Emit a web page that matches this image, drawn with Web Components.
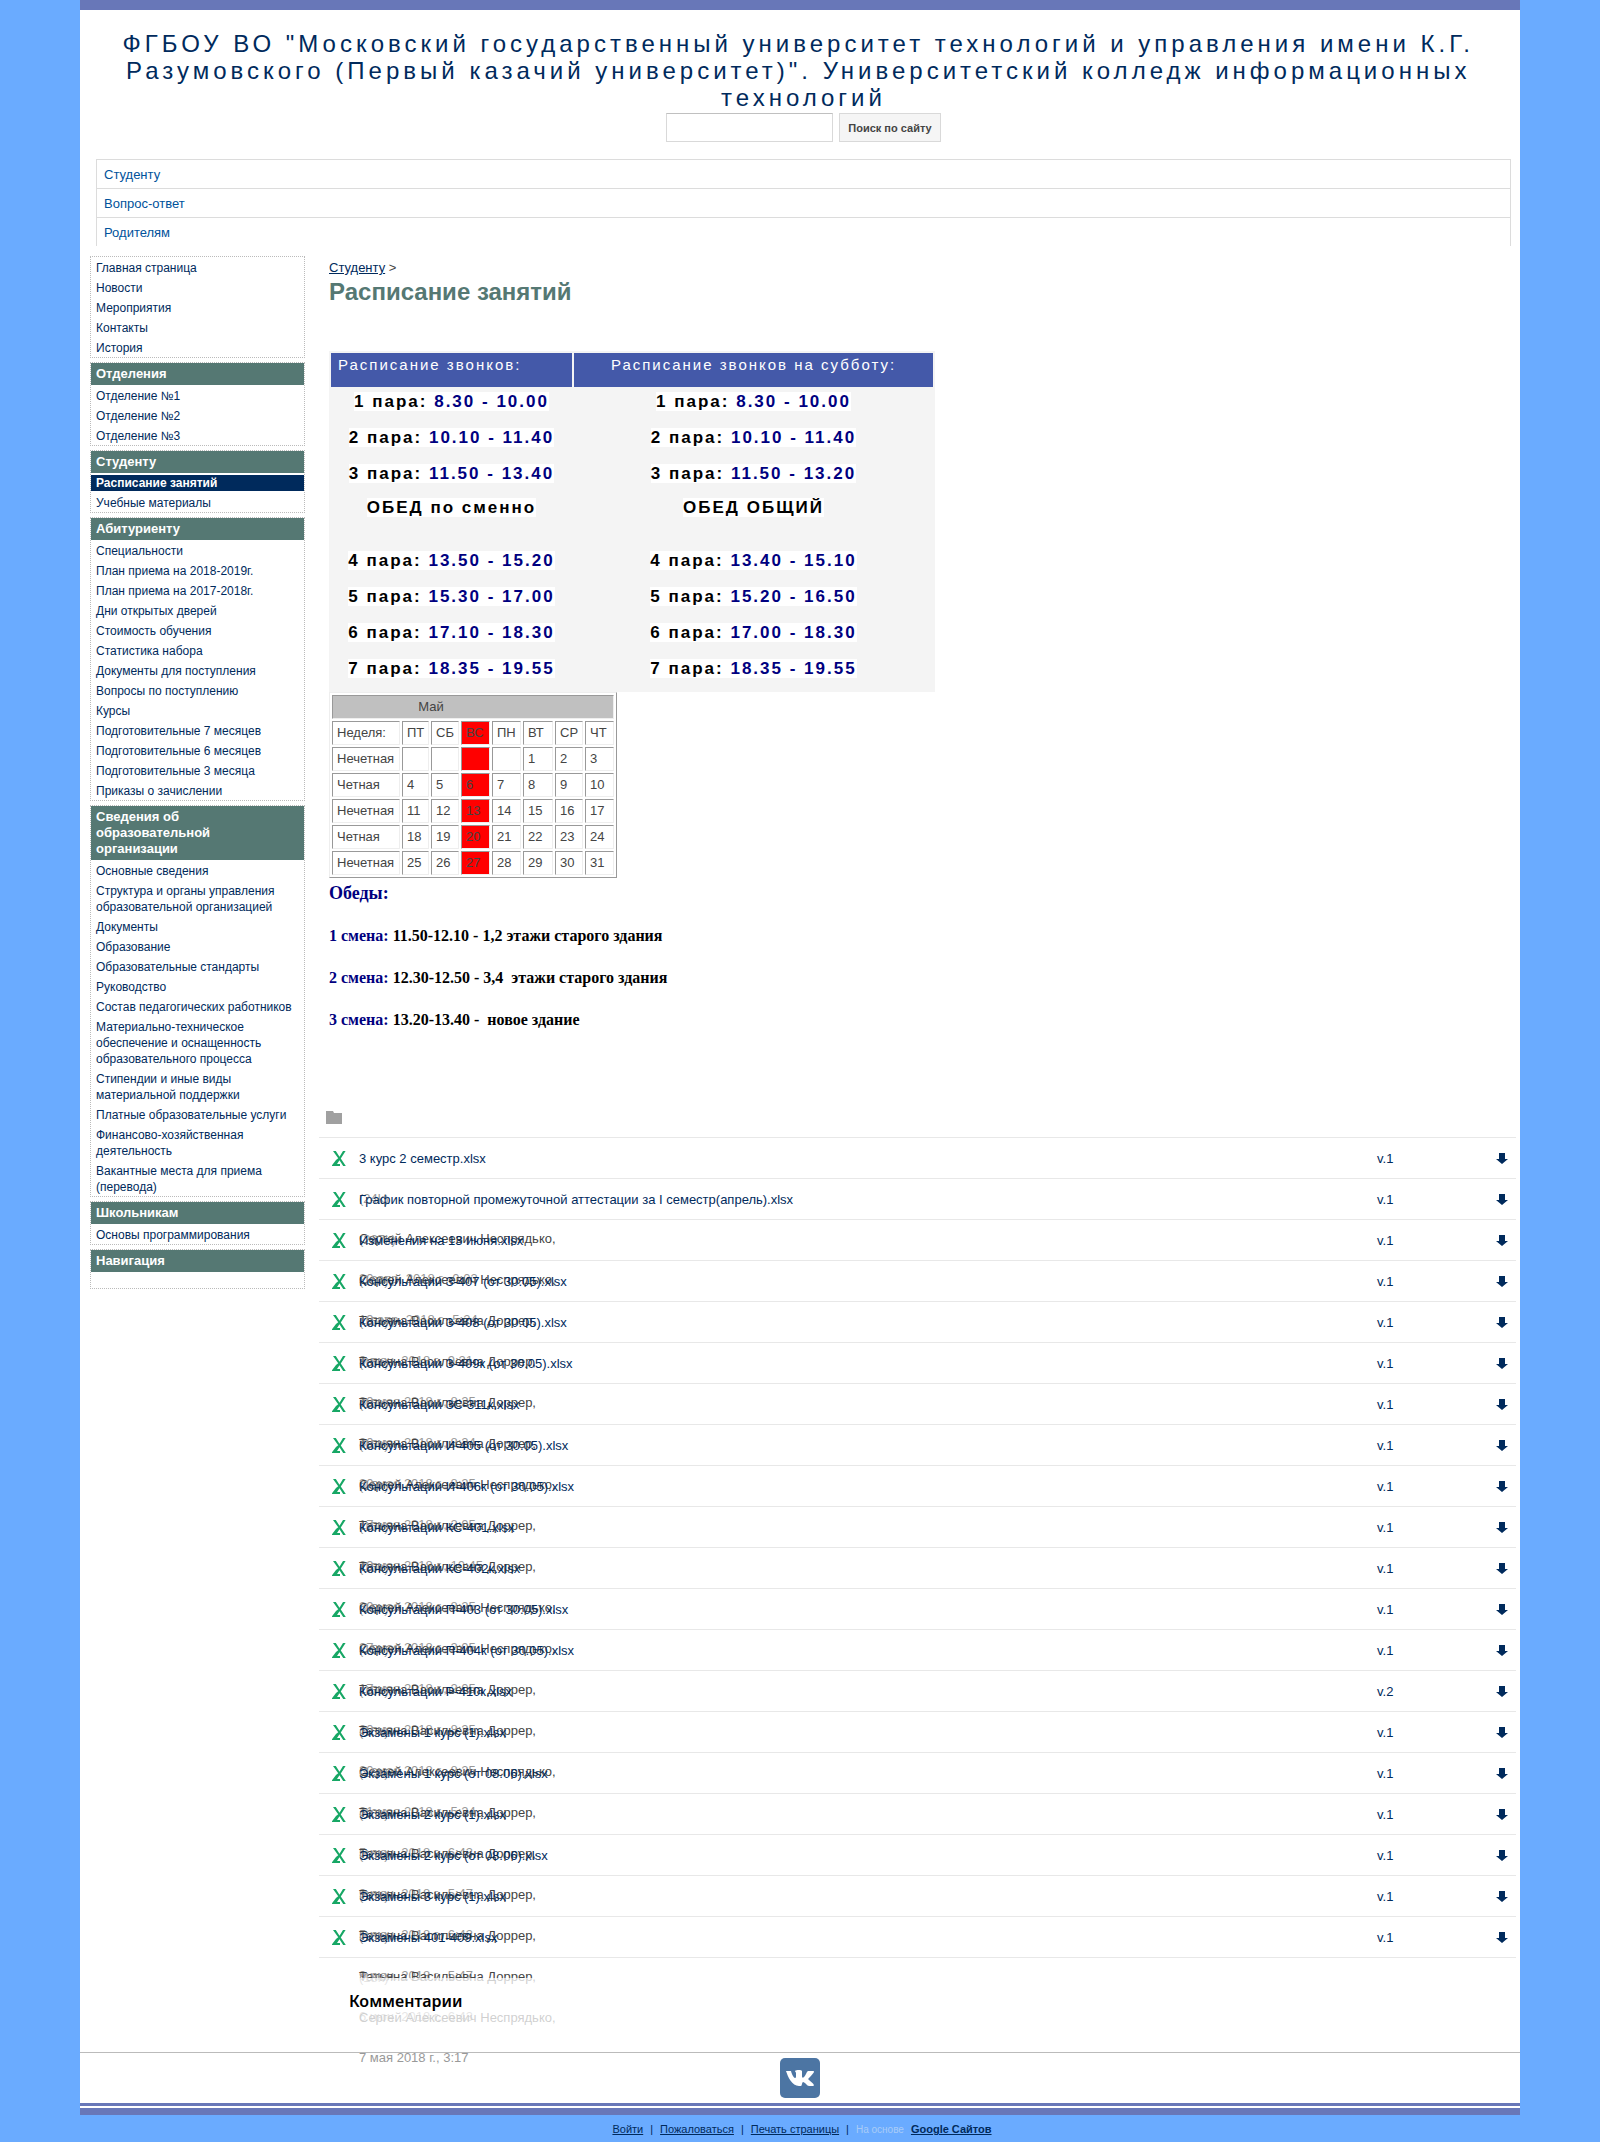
<!DOCTYPE html>
<html lang="ru">
<head>
<meta charset="utf-8">
<meta name="viewport" content="width=device-width, initial-scale=1">
<title>Расписание занятий</title>
<style>
:root{--link:#002a5c;--green:#557873;--line:#dcdcdc;--bar:#6877b8;--sky:#6aabff}
body{margin:0;background:var(--sky);font-family:"Liberation Sans",Arial,sans-serif;font-size:13px;line-height:16px;color:#444}
</style>
</head>
<body>
<page-shell>
  <site-header slot="header"></site-header>
  <nav slot="side" aria-label="Разделы">
    <side-box items="Главная страница|Новости|Мероприятия|Контакты|История"></side-box>
    <side-box heading="Отделения" items="Отделение №1|Отделение №2|Отделение №3"></side-box>
    <side-box heading="Студенту" items="*Расписание занятий|Учебные материалы"></side-box>
    <side-box heading="Абитуриенту" items="Специальности|План приема на 2018-2019г.|План приема на 2017-2018г.|Дни открытых дверей|Стоимость обучения|Статистика набора|Документы для поступления|Вопросы по поступлению|Курсы|Подготовительные 7 месяцев|Подготовительные 6 месяцев|Подготовительные 3 месяца|Приказы о зачислении"></side-box>
    <side-box heading="Сведения об образовательной организации" items="Основные сведения|Структура и органы управления образовательной организацией|Документы|Образование|Образовательные стандарты|Руководство|Состав педагогических работников|Материально-техническое обеспечение и оснащенность образовательного процесса|Стипендии и иные виды материальной поддержки|Платные образовательные услуги|Финансово-хозяйственная деятельность|Вакантные места для приема (перевода)"></side-box>
    <side-box heading="Школьникам" items="Основы программирования"></side-box>
    <side-box heading="Навигация" items=""></side-box>
  </nav>
  <page-title parent="Студенту">Расписание занятий</page-title>
  <bell-table></bell-table>
  <month-table></month-table>
  <lunch-list></lunch-list>
  <file-list></file-list>
  <page-comments>Комментарии</page-comments>
  <social-strip slot="social"></social-strip>
</page-shell>
<site-footer></site-footer>

<script>
const define = (name, render) => customElements.define(name, class extends HTMLElement {
  connectedCallback() {
    if (this.shadowRoot) return;
    const t = document.createElement('template');
    t.innerHTML = render(this);
    this.attachShadow({ mode: 'open' }).append(t.content.cloneNode(true));
  }
});

define('page-shell', () => `
<style>
:host{display:block;width:90%;margin:0 auto;background:#fff;border-top:10px solid var(--bar);box-sizing:border-box}
.cols{display:flex;padding:10px 4px 0 10px;gap:14px;align-items:flex-start}
aside{flex:0 0 215px}
main{flex:1;min-width:0}
</style>
<slot name="header"></slot>
<div class="cols"><aside><slot name="side"></slot></aside><main><slot></slot></main></div>
<slot name="social"></slot>`);

define('site-header', () => `
<style>
:host{display:block;padding:20px 9px 0 16px}
h1{margin:0;font-size:24px;line-height:27px;font-weight:400;letter-spacing:4px;color:var(--link);text-align:center;white-space:break-spaces}
form{display:flex;justify-content:center;gap:6px;margin:2px 0 17px}
input,button{box-sizing:border-box;height:29px;border:1px solid #d9d9d9;border-radius:0;font:13px "Liberation Sans",sans-serif}
input{width:167px;border-top-color:#c0c0c0;padding:0 8px;background:#fff}
button{padding:0 8px;background:#f5f5f5;color:#444;font-size:11px;font-weight:700}
ul{list-style:none;margin:0;padding:0;border:1px solid var(--line);border-bottom:0}
li+li{border-top:1px solid var(--line)}
a{display:block;padding:7px 7px 5px;line-height:16px;color:#00529b;text-decoration:none}
</style>
<h1>ФГБОУ ВО "Московский государственный университет технологий и управления имени К.Г. Разумовского (Первый казачий университет)". Университетский колледж информационных технологий</h1>
<form role="search"><input type="text" aria-label="Поиск"><button type="button">Поиск по сайту</button></form>
<nav><ul><li><a href="#">Студенту</a></li><li><a href="#">Вопрос-ответ</a></li><li><a href="#">Родителям</a></li></ul></nav>`);

define('side-box', el => {
  const heading = el.getAttribute('heading');
  const items = el.getAttribute('items').split('|').filter(Boolean);
  return `
<style>
:host{display:block;border:1px dotted #bbb;margin-bottom:4px;font-size:12px}
h2{margin:0;padding:3px 60px 3px 5px;background:var(--green);color:#fff;font-size:13px;line-height:16px}
ul{list-style:none;margin:0;padding:0;min-height:16px}
li{padding:3px 5px 1px}
li.on{margin:2px 0 1px;padding:0 5px;background:var(--link);font-weight:700}
a{color:var(--link);text-decoration:none}
.on a{color:#fff}
</style>
${heading ? `<h2>${heading}</h2>` : ''}
<ul>${items.map(i => i[0] === '*' ? `<li class="on"><a href="#" aria-current="page">${i.slice(1)}</a></li>` : `<li><a href="#">${i}</a></li>`).join('')}</ul>`;
});

define('page-title', el => `
<style>
:host{display:block;padding:4px 10px 44px}
a{color:var(--link)}
h1{margin:1px 0 0;font-size:24px;line-height:30px;color:var(--green)}
</style>
<div><a href="#">${el.getAttribute('parent')}</a> &gt;</div>
<h1><slot></slot></h1>`);

const weekday = ['8.30 - 10.00', '10.10 - 11.40', '11.50 - 13.40', 'ОБЕД по сменно', '13.50 - 15.20', '15.30 - 17.00', '17.10 - 18.30', '18.35 - 19.55'];
const saturday = ['8.30 - 10.00', '10.10 - 11.40', '11.50 - 13.20', 'ОБЕД ОБЩИЙ', '13.40 - 15.10', '15.20 - 16.50', '17.00 - 18.30', '18.35 - 19.55'];
const bell = (text, i) => i === 3 ? `<b>${text}</b>` : `<b>${i < 3 ? i + 1 : i} пара: <i>${text}</i></b>`;
define('bell-table', () => `
<style>
:host{display:block;padding:0 10px}
table{border-collapse:separate;border-spacing:2px;background:#f4f4f4;letter-spacing:2px;width:606px;table-layout:fixed}
th{background:#4459a9;color:#fff;font-size:15px;font-weight:400;line-height:20px;height:34px;padding:2px 7px 12px;box-sizing:border-box;vertical-align:top;text-align:center}
th:first-child{text-align:left;width:241px}
td{padding:0;height:34px;text-align:center;vertical-align:top;font-size:17px;line-height:26px}
tr.lunch td{height:49px;line-height:22px}
b{background:#fff;color:#000}
i{font-style:normal;color:#000080}
</style>
<table>
<thead><tr><th scope="col">Расписание звонков:</th><th scope="col">Расписание звонков на субботу:</th></tr></thead>
<tbody>${weekday.map((t, i) => `<tr${i === 3 ? ' class="lunch"' : ''}><td>${bell(t, i)}</td><td>${bell(saturday[i], i)}</td></tr>`).join('')}</tbody>
</table>`);

const weeks = ['Неделя:|ПТ|СБ|ВС|ПН|ВТ|СР|ЧТ', 'Нечетная|||||1|2|3', 'Четная|4|5|6|7|8|9|10', 'Нечетная|11|12|13|14|15|16|17', 'Четная|18|19|20|21|22|23|24', 'Нечетная|25|26|27|28|29|30|31'];
define('month-table', () => `
<style>
:host{display:block;padding:0 10px}
table{width:288px;table-layout:fixed;border-collapse:separate;border-spacing:2px;border:1px solid;border-color:#eee #999 #999 #eee}
th,td{box-sizing:border-box;height:24px;padding:0 4px;border:1px solid;border-color:#999 #eee #eee #999;font-weight:400;text-align:left}
thead th{background:#c0c0c0;text-align:center;padding-right:88px}
.sun{background:#f00}
</style>
<table>
<colgroup>${[68, 27, 28, 29, 29, 30, 28, 29].map(w => `<col style="width:${w}px">`).join('')}</colgroup>
<thead><tr><th colspan="8">Май</th></tr></thead>
<tbody>${weeks.map(w => '<tr>' + w.split('|').map((c, i) => `<td${i === 3 ? ' class="sun"' : ''}>${c}</td>`).join('') + '</tr>').join('')}</tbody>
</table>`);

define('lunch-list', () => `
<style>
:host{display:block;padding:4px 10px 80px;font:700 16px/22px "Liberation Serif","Times New Roman",serif;color:#000}
h2{margin:0;font-size:18px;line-height:23px;color:#000080}
p{margin:20px 0 0;white-space:pre-wrap}
span{color:#000080}
</style>
<h2>Обеды:</h2>
<p><span>1 смена:</span> 11.50-12.10 - 1,2 этажи старого здания</p>
<p><span>2 смена:</span> 12.30-12.50 - 3,4  этажи старого здания</p>
<p><span>3 смена:</span> 13.20-13.40 -  новое здание</p>`);

const S = 'Сергей Алексеевич Неспрядько,', T = 'Татьяна Васильевна Доррер,';
const files = [
  ['3 курс 2 семестр.xlsx', '24k', S, '20 апр. 2018 г., 0:03'],
  ['График повторной промежуточной аттестации за I семестр(апрель).xlsx', '227k', S, '19 апр. 2018 г., 5:24'],
  ['Изменения на 13 июня.xlsx', '16k', T, '9 июн. 2018 г., 9:21'],
  ['Консультации З-407 (от 30.05).xlsx', '15k', T, '30 мая 2018 г., 8:25'],
  ['Консультации З-408 (от 30.05).xlsx', '15k', T, '30 мая 2018 г., 8:24'],
  ['Консультации З-409к (от 30.05).xlsx', '15k', T, '30 мая 2018 г., 8:25'],
  ['Консультации ЗС-311к.xlsx', '15k', S, '17 мая 2018 г., 2:05'],
  ['Консультации И-405 (от 30.05).xlsx', '15k', T, '29 мая 2018 г., 10:45'],
  ['Консультации И-406к (от 30.05).xlsx', '15k', T, '30 мая 2018 г., 8:25'],
  ['Консультации КС-401.xlsx', '15k', S, '27 мая 2018 г., 2:05'],
  ['Консультации КС-402к.xlsx', '15k', S, '17 мая 2018 г., 2:05'],
  ['Консультации П-403 (от 30.05).xlsx', '15k', T, '30 мая 2018 г., 8:25'],
  ['Консультации П-404к (от 30.05).xlsx', '15k', T, '30 мая 2018 г., 8:25'],
  ['Консультации Р-410к.xlsx', '15k', S, '31 мая 2018 г., 5:24', 2],
  ['Экзамены 1 курс (1).xlsx', '16k', T, '5 июн. 2018 г., 6:43'],
  ['Экзамены 1 курс (от 08.06).xlsx', '16k', T, '9 июн. 2018 г., 5:47'],
  ['Экзамены 2 курс (1).xlsx', '16k', T, '5 июн. 2018 г., 6:43'],
  ['Экзамены 2 курс (от 08.06).xlsx', '16k', T, '9 июн. 2018 г., 5:47'],
  ['Экзамены 3 курс (1).xlsx', '16k', T, '6 июн. 2018 г., 6:43'],
  ['Экзамены 401-409.xlsx', '18k', S, '7 мая 2018 г., 3:17'],
];
define('file-list', () => `
<style>
:host{display:block}
.folder{display:block;margin:0 0 13px 7px}
table{width:100%;table-layout:fixed;border-collapse:collapse;border-bottom:1px solid #e8e8e8}
td{padding:0;border-top:1px solid #e8e8e8;height:40px;vertical-align:top;line-height:38px}
.ico{width:40px}.ver{width:115px;color:var(--link)}.get{width:24px}
td.ver{box-sizing:border-box;padding-top:2px}
.ico svg{display:block;margin:13px 0 0 13px}
.get svg{display:block;margin:15px 0 0 4px}
/* a cell is one line tall: size, author and date run on below it */
.stack{height:40px;white-space:nowrap;line-height:42px}
.stack>*{display:block;height:40px}
small{font-size:13px;color:#999}
a{color:var(--link);text-decoration:none}
</style>
<svg class="folder" width="16" height="13" viewBox="0 0 16 13" aria-hidden="true"><path d="M0 0H7L8 2H16V13H0Z" fill="#a0a0a0"/></svg>
<table><tbody>${files.map(([name, size, who, when, v = 1]) => `<tr>
<td class="ico"><svg width="15" height="15" viewBox="0 0 15 15" aria-hidden="true"><path fill="#17a765" d="M1 0H3.800L7.500 5.800L11 0H13.600L8.800 7.500L13.800 15H11.200L7.500 9.200L5 13H8V15H0V14.300L4 9L6.200 7.300Z"/></svg></td>
<td><div class="stack"><a href="#">${name}</a><small>(${size})</small><span>${who}</span><small>${when}</small></div></td>
<td class="ver">v.${v}</td>
<td class="get"><a href="#" aria-label="Загрузить"><svg width="12" height="11" viewBox="0 0 12 11" aria-hidden="true"><path fill="#002a5c" d="M3 0H9V6H12L6 11L0 6H3Z"/></svg></a></td>
</tr>`).join('')}</tbody></table>`);

define('page-comments', () => `
<style>
:host{display:block;position:relative;margin-top:20px;padding:12px 30px 40px;background:rgba(255,255,255,.75)}
h2{margin:0;font:600 16px/22px "Noto Sans",sans-serif;color:#000}
</style>
<h2><slot></slot></h2>`);

define('social-strip', () => `
<style>
:host{display:flex;justify-content:center;border-top:1px solid #bbb;padding:5px 0;border-bottom:3px solid var(--bar)}
a,svg{display:block}
</style>
<a href="#" aria-label="ВКонтакте"><svg width="40" height="40" viewBox="0 0 40 40" aria-hidden="true"><rect width="40" height="40" rx="5" fill="#4c75a3"/><path fill="#fff" d="M6 13H11C12 17 14 20 15 20C16 20 16 19 16 18V15C16 14 15 14 15 13C16 12 21 11.500 22 13V18C22 20 23 20 24 19C26 17 27 13 28 13H33C35 13 34 15 29 20C28 21 28 21 29 22C35 27 35 28 32 28H29C27 28 25 24 23 24C22 24 22 28 21 28H19C12 28 8 19 6 13Z"/></svg></a>`);

define('site-footer', () => `
<style>
:host{display:block;width:90%;margin:0 auto;font-size:11px}
.rule{border-top:2px solid #fff;height:7px;background:var(--bar)}
footer{display:flex;justify-content:center;align-items:baseline;gap:7px;padding:6px 0 4px 4px;color:var(--link)}
a{color:var(--link)}
small{font-size:10px;color:#a9cbf7}
</style>
<div class="rule"></div>
<footer><a href="#">Войти</a><span>|</span><a href="#">Пожаловаться</a><span>|</span><a href="#">Печать страницы</a><span>|</span><small>На основе</small><b><a href="#">Google Сайтов</a></b></footer>`);
</script>
</body>
</html>
